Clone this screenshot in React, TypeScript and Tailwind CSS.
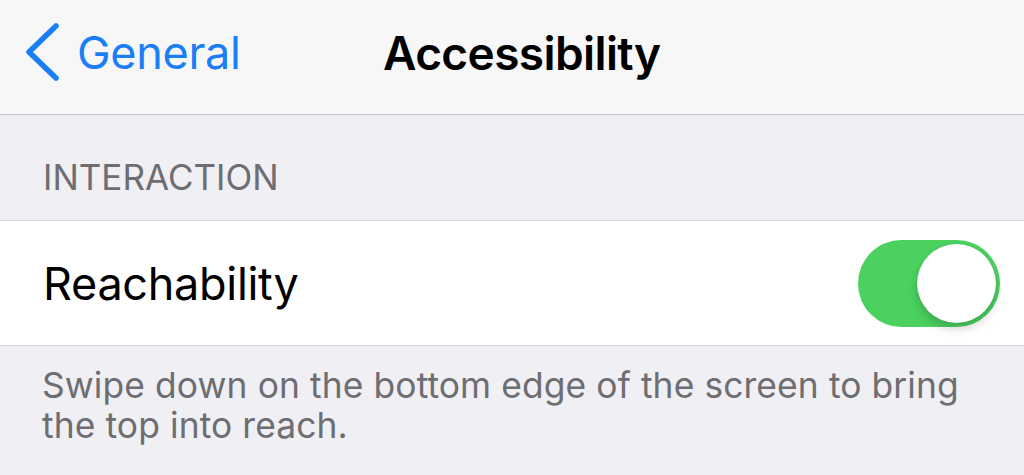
import React, { useState } from 'react';

export default function App() {
  const [reach, setReach] = useState(true);

  return (
    <div className="w-[1024px] h-[475px] overflow-hidden bg-[#efeff4] font-['Inter','Liberation_Sans',sans-serif]">
      {/* Nav bar */}
      <div className="relative h-[115px] bg-[#f7f7f8] border-b border-[#c4c4c8] flex items-center">
        <button className="flex items-center pl-[25px] mb-[10px] text-[#1a7ef6]">
          <svg width="36" height="58" viewBox="0 0 36 58" fill="none" className="mr-[16px]">
            <path d="M31 3 L4 29 L31 55" stroke="currentColor" strokeWidth="5.5" strokeLinecap="round" strokeLinejoin="round" />
          </svg>
          <span className="text-[45px] leading-none tracking-[-0.3px]">General</span>
        </button>
        <h1 className="absolute left-[383px] top-[30px] text-[46px] leading-none font-semibold text-black tracking-[-0.6px]">
          Accessibility
        </h1>
      </div>

      {/* Section header */}
      <div className="h-[105px] flex items-end pl-[43px] pb-[25px]">
        <span className="text-[35px] leading-none text-[#6d6d72]">INTERACTION</span>
      </div>

      {/* Row */}
      <div className="h-[126px] bg-white border-y border-[#d8d8dc] flex items-center justify-between pl-[43px] pr-[24px]">
        <span className="text-[45px] leading-none text-black tracking-[-0.3px]">Reachability</span>
        <button
          onClick={() => setReach(!reach)}
          className={`relative w-[142px] h-[87px] rounded-full transition-colors ${reach ? 'bg-[#4ad15f]' : 'bg-[#e5e5ea]'}`}
        >
          <span
            className={`absolute top-[4px] w-[79px] h-[79px] rounded-full bg-white shadow-[0_6px_10px_rgba(0,0,0,0.18),0_0_1px_rgba(0,0,0,0.2)] transition-all ${reach ? 'left-[59px]' : 'left-[4px]'}`}
          />
        </button>
      </div>

      {/* Footer */}
      <p className="pl-[42px] pr-[40px] pt-[20px] text-[35.4px] leading-[40px] text-[#6d6d72] tracking-[0.1px]">
        Swipe down on the bottom edge of the screen to bring the top into reach.
      </p>
    </div>
  );
}
